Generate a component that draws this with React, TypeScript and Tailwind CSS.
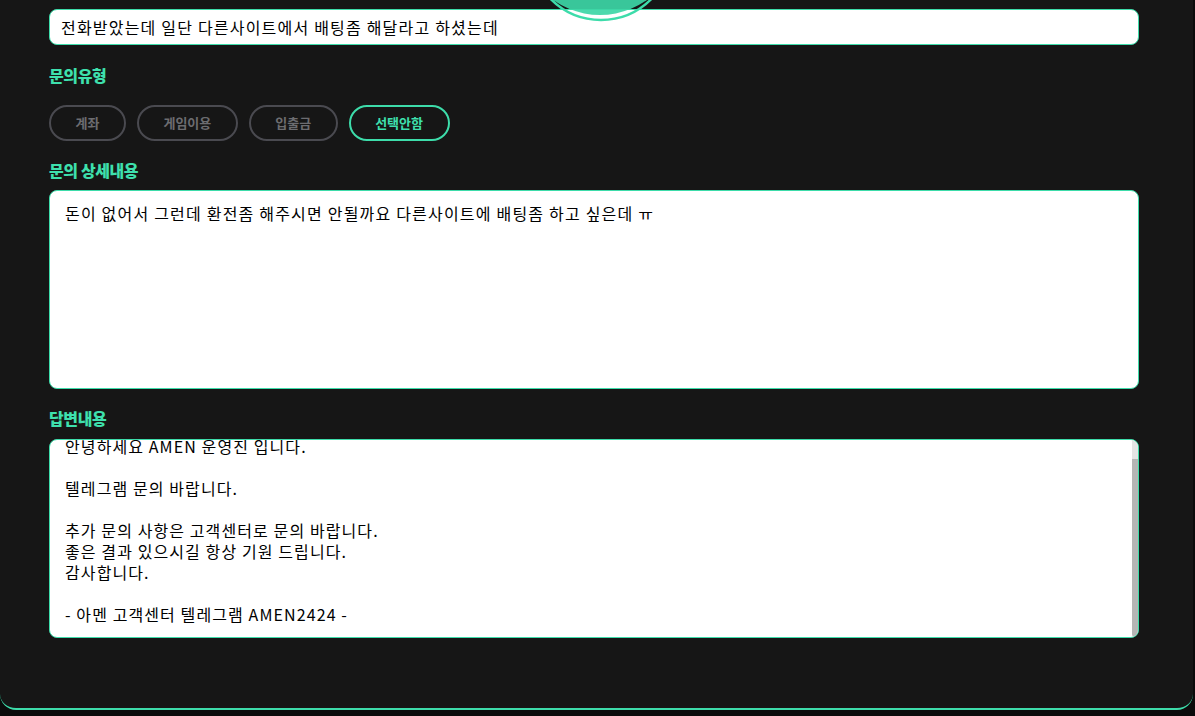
import { useState } from 'react';

const font = { fontFamily: '"Noto Sans CJK KR", "Noto Sans", sans-serif' };

const inquiryTypes = ['계좌', '게임이용', '입출금', '선택안함'];

const answerLines = [
  '안녕하세요 AMEN 운영진 입니다.',
  '',
  '텔레그램 문의 바랍니다.',
  '',
  '추가 문의 사항은 고객센터로 문의 바랍니다.',
  '좋은 결과 있으시길 항상 기원 드립니다.',
  '감사합니다.',
  '',
  '- 아멘 고객센터 텔레그램 AMEN2424 -',
];

function Label({ children }: { children: React.ReactNode }) {
  return (
    <h3 className="h-[22px] text-[16px] leading-[22px] font-extrabold tracking-[-0.4px] text-[#3ee0ad]">
      {children}
    </h3>
  );
}

export default function App() {
  const [selected, setSelected] = useState('선택안함');

  return (
    <div className="min-h-screen bg-[#0b0b0b]" style={font}>
      <div className="relative mr-[2px] h-[710px] rounded-b-[16px] border-b-2 border-[#3ddcaa] bg-[#161616] pt-[9px] pr-[54px] pl-[49px]">
        {/* 상단 로고 */}
        <svg
          className="pointer-events-none absolute top-0 left-[500px] z-10"
          width="200"
          height="30"
          viewBox="0 0 200 30"
        >
          <circle cx="100" cy="-66" r="81" fill="#3dd6a6" fillOpacity="0.92" />
          <circle cx="101" cy="-51" r="71" fill="none" stroke="#3ddcaa" strokeWidth="2.5" />
        </svg>

        {/* 제목 */}
        <input
          readOnly
          defaultValue="전화받았는데 일단 다른사이트에서 배팅좀 해달라고 하셨는데"
          className="block h-[36px] w-full rounded-[8px] border border-[#3ddcaa] bg-white px-[11px] text-[16px] tracking-[1.2px] text-black outline-none"
          style={font}
        />

        {/* 문의유형 */}
        <div className="mt-[19px]">
          <Label>문의유형</Label>
        </div>
        <div className="mt-[19px] flex gap-[11px]">
          {inquiryTypes.map((type) => (
            <button
              key={type}
              onClick={() => setSelected(type)}
              className={
                type === selected
                  ? 'h-[36px] rounded-full border-2 border-[#3ddcaa] px-[24.5px] text-[13px] font-bold text-[#3ee0ad]'
                  : 'h-[36px] rounded-full border-2 border-[#4a4a50] px-[24.5px] text-[13px] font-bold text-[#6c6c70]'
              }
            >
              {type}
            </button>
          ))}
        </div>

        {/* 문의 상세내용 */}
        <div className="mt-[18px]">
          <Label>문의 상세내용</Label>
        </div>
        <textarea
          readOnly
          defaultValue="돈이 없어서 그런데 환전좀 해주시면 안될까요 다른사이트에 배팅좀 하고 싶은데 ㅠ"
          className="mt-[9px] block h-[199px] w-full resize-none rounded-[8px] border border-[#3ddcaa] bg-white px-[15px] py-[12px] text-[16px] leading-[21px] tracking-[1.2px] text-black outline-none"
          style={font}
        />

        {/* 답변내용 */}
        <div className="mt-[18px]">
          <Label>답변내용</Label>
        </div>
        <div className="relative mt-[10px] h-[199px] w-full overflow-hidden rounded-[8px] border border-[#3ddcaa] bg-white px-[15px]">
          <div className="-mt-[4px] text-[16px] leading-[21px] tracking-[1.1px] text-black">
            {answerLines.map((line, i) => (
              <div key={i} className="h-[21px] whitespace-pre">
                {line}
              </div>
            ))}
          </div>
          <div className="absolute top-0 right-0 bottom-0 flex w-[6px] flex-col">
            <div className="h-[19px] bg-[#e4e4e4]" />
            <div className="flex-1 rounded-b-[3px] bg-[#b5b5b5]" />
          </div>
        </div>
      </div>
    </div>
  );
}
